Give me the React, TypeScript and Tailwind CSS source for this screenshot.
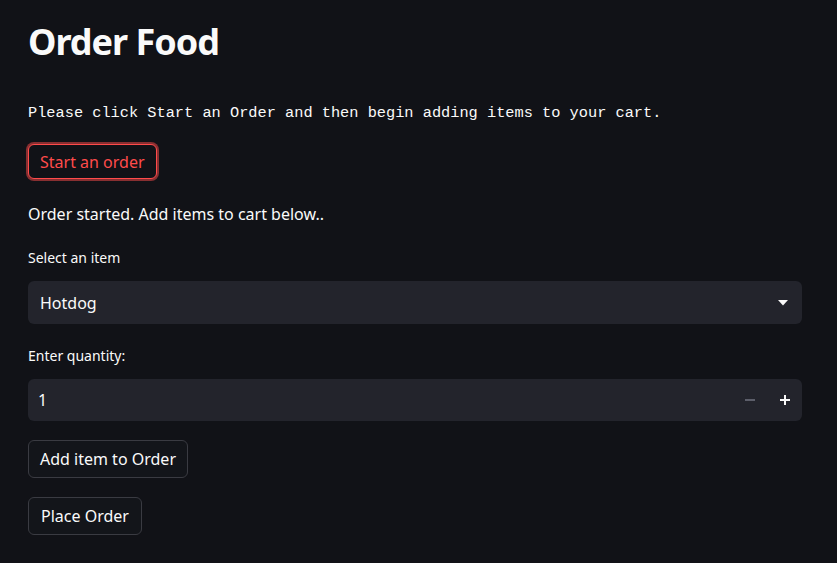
import React, { useState } from "react";

const sans = { fontFamily: '"Noto Sans", "Open Sans", sans-serif' };

export default function App() {
  const [qty, setQty] = useState(1);

  return (
    <div
      className="min-h-[563px] w-full bg-[#111217] text-[#fafafa]"
      style={sans}
    >
      <div className="flex w-[802px] flex-col pl-[28px] pt-[18px]">
        <h1 className="text-[36px] font-bold leading-[48px] tracking-[-1px]">
          Order Food
        </h1>

        <p
          className="mt-[37px] text-[15.3px] leading-[20px] text-[#fafafa]"
          style={{ fontFamily: '"Liberation Mono", "DejaVu Sans Mono", monospace' }}
        >
          Please click Start an Order and then begin adding items to your cart.
        </p>

        <div className="mt-[21px]">
          <button className="h-[35px] rounded-[6px] border border-[#ff4b4b] bg-[#111217] px-[11px] text-[16px] text-[#ff4b4b] shadow-[0_0_0_2px_rgba(255,75,75,0.5)]">
            Start an order
          </button>
        </div>

        <p className="mt-[23px] text-[16px] leading-[24px]">
          Order started. Add items to cart below..
        </p>

        <label className="mt-[22px] text-[14px] leading-[20px]">Select an item</label>
        <div className="mt-[13px] flex h-[43px] items-center justify-between rounded-[6px] bg-[#23242c] pl-[12px] pr-[14px]">
          <span className="text-[16px]">Hotdog</span>
          <svg width="10" height="6" viewBox="0 0 10 6">
            <path d="M0 0h10L5 5.5z" fill="#fafafa" />
          </svg>
        </div>

        <label className="mt-[22px] text-[14px] leading-[20px]">Enter quantity:</label>
        <div className="mt-[13px] flex h-[42px] items-center rounded-[6px] bg-[#23242c] pl-[10px]">
          <span className="flex-1 text-[16px]">{qty}</span>
          <button
            className="flex h-[42px] w-[35px] items-center justify-center"
            onClick={() => setQty(Math.max(1, qty - 1))}
          >
            <svg width="10" height="2" viewBox="0 0 10 2">
              <rect width="10" height="2" fill="#5c5e6a" />
            </svg>
          </button>
          <button
            className="flex h-[42px] w-[35px] items-center justify-center"
            onClick={() => setQty(qty + 1)}
          >
            <svg width="10" height="10" viewBox="0 0 10 10">
              <rect x="4" width="2" height="10" fill="#fafafa" />
              <rect y="4" width="10" height="2" fill="#fafafa" />
            </svg>
          </button>
        </div>

        <div className="mt-[19px]">
          <button className="h-[38px] rounded-[6px] border border-[#3a3b42] bg-[#13151a] px-[11px] text-[16px]">
            Add item to Order
          </button>
        </div>
        <div className="mt-[19px]">
          <button className="h-[38px] rounded-[6px] border border-[#3a3b42] bg-[#13151a] px-[12px] text-[16px]">
            Place Order
          </button>
        </div>
      </div>
    </div>
  );
}
